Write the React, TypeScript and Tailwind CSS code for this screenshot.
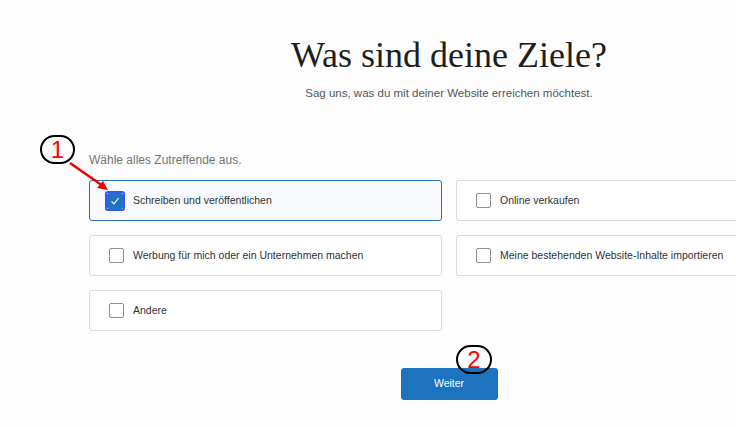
import React from 'react';

const goals = [
  { label: 'Schreiben und veröffentlichen', checked: true },
  { label: 'Online verkaufen', checked: false },
  { label: 'Werbung für mich oder ein Unternehmen machen', checked: false },
  { label: 'Meine bestehenden Website-Inhalte importieren', checked: false },
  { label: 'Andere', checked: false },
];

function Box({ checked }: { checked: boolean }) {
  if (checked) {
    return (
      <span className="flex h-[20px] w-[20px] shrink-0 items-center justify-center rounded-[3px] border-2 border-[#3858e9]">
        <span className="flex h-[16px] w-[16px] items-center justify-center rounded-[2px] bg-[#1e73c6]">
          <svg width="12" height="12" viewBox="0 0 12 12" fill="none">
            <path d="M2.5 6.3 L5 8.8 L9.6 3" stroke="white" strokeWidth="1.2" />
          </svg>
        </span>
      </span>
    );
  }
  return <span className="h-[15px] w-[15px] shrink-0 rounded-[2px] border border-[#8c8f94] bg-white" />;
}

export default function App() {
  return (
    <div className="relative h-[427px] w-[736px] overflow-hidden bg-[#fdfdfd]" style={{ fontFamily: '"Liberation Sans", sans-serif' }}>
      <div className="flex w-[809px] flex-col items-center pl-[89px]">
        <h1 className="mt-[33px] text-[36px] leading-[44px] text-[#1e1e1e]" style={{ fontFamily: '"Liberation Serif", serif' }}>
          Was sind deine Ziele?
        </h1>
        <p className="mt-[8px] text-[11.5px] text-[#50575e]">Sag uns, was du mit deiner Website erreichen möchtest.</p>
        <div className="mt-[49px] w-full">
          <p className="text-[12px] text-[#757575]">Wähle alles Zutreffende aus.</p>
          <div className="mt-[11px] grid grid-cols-2 gap-x-[14px] gap-y-[14px]">
            {goals.map((g) => (
              <div
                key={g.label}
                className={
                  g.checked
                    ? 'flex h-[41px] items-center gap-[8px] rounded-[3px] border border-[#2271b1] bg-[#f8fafd] pl-[15px]'
                    : 'flex h-[41px] items-center gap-[9px] rounded-[3px] border border-[#dcdcde] bg-white pl-[19px]'
                }
              >
                <Box checked={g.checked} />
                <span className="text-[10.5px] text-[#2c3338]">{g.label}</span>
              </div>
            ))}
          </div>
        </div>
        <button className="mt-[37px] h-[32px] w-[97px] rounded-[3px] bg-[#1e73be] text-[10.5px] text-white">Weiter</button>
      </div>

      {/* annotation 1 */}
      <div className="absolute left-[40px] top-[135px] flex h-[29px] w-[35px] items-center justify-center rounded-full border-2 border-black text-[24px] leading-none text-[#ff0000]">
        1
      </div>
      <svg className="absolute left-0 top-0" width="736" height="427">
        <line x1="70" y1="163" x2="103" y2="186" stroke="#e00" strokeWidth="2.5" />
        <polygon points="108,190 97,188 103,181" fill="#e00" />
      </svg>
      {/* annotation 2 */}
      <div className="absolute left-[456px] top-[345px] flex h-[29px] w-[36px] items-center justify-center rounded-full border-2 border-black text-[24px] leading-none text-[#ff0000]">
        2
      </div>
    </div>
  );
}
